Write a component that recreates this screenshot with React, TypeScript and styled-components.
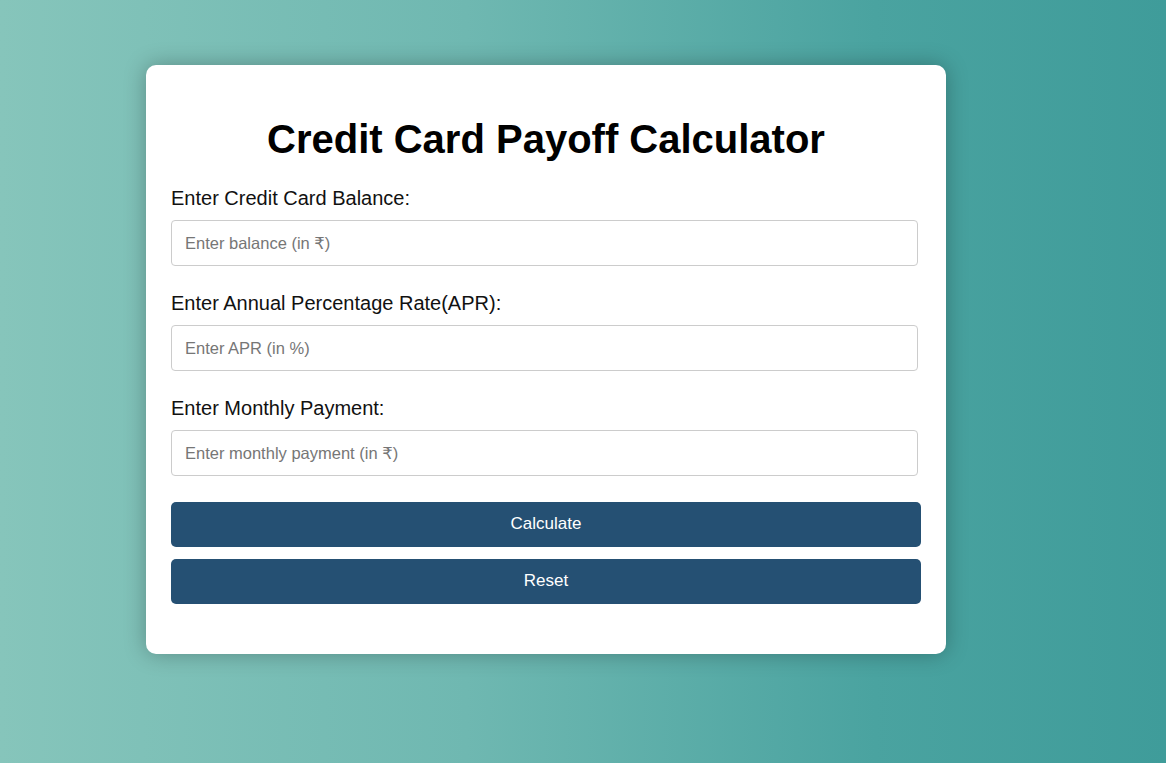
import React from "react";
import styled, { createGlobalStyle } from "styled-components";

const GlobalStyle = createGlobalStyle`
  html, body {
    margin: 0;
    padding: 0;
  }
  body {
    font-family: "Liberation Sans", Arial, sans-serif;
    background: linear-gradient(to right, #86c5bb 0%, #6fb8b1 40%, #4aa3a0 75%, #3f9c9a 100%);
    min-height: 100vh;
  }
`;

const Page = styled.div`
  min-height: 100vh;
  box-sizing: border-box;
  padding: 65px 0 0 146px;
`;

const Card = styled.div`
  width: 800px;
  box-sizing: border-box;
  background: #ffffff;
  border-radius: 10px;
  box-shadow: 0 0 22px rgba(0, 0, 0, 0.28);
  padding: 51px 25px 50px 25px;
  display: flex;
  flex-direction: column;
`;

const Title = styled.h1`
  margin: 0 0 25px 0;
  font-size: 40px;
  line-height: 46px;
  font-weight: 700;
  text-align: center;
  color: #000;
`;

const Field = styled.div`
  display: flex;
  flex-direction: column;
  margin-bottom: 26px;
`;

const Label = styled.label`
  font-size: 20px;
  line-height: 23px;
  color: #111;
  margin-bottom: 10px;
`;

const Input = styled.input`
  width: 747px;
  height: 46px;
  box-sizing: border-box;
  border: 1px solid #cccccc;
  border-radius: 4px;
  padding: 0 13px;
  font-family: "Liberation Sans", "DejaVu Sans", Arial, sans-serif;
  font-size: 16.5px;
  color: #222;
  outline: none;
  &::placeholder {
    color: #767676;
  }
`;

const Buttons = styled.div`
  display: flex;
  flex-direction: column;
  gap: 12px;
`;

const Button = styled.button`
  width: 750px;
  height: 45px;
  padding: 0 0 1px 0;
  border: none;
  border-radius: 5px;
  background: #255073;
  color: #ffffff;
  font-family: "Liberation Sans", Arial, sans-serif;
  font-size: 17px;
  cursor: pointer;
`;

export default function App() {
  return (
    <>
      <GlobalStyle />
      <Page>
        <Card>
          <Title>Credit Card Payoff Calculator</Title>
          <Field>
            <Label>Enter Credit Card Balance:</Label>
            <Input type="number" placeholder="Enter balance (in ₹)" />
          </Field>
          <Field>
            <Label>Enter Annual Percentage Rate(APR):</Label>
            <Input type="number" placeholder="Enter APR (in %)" />
          </Field>
          <Field>
            <Label>Enter Monthly Payment:</Label>
            <Input type="number" placeholder="Enter monthly payment (in ₹)" />
          </Field>
          <Buttons>
            <Button>Calculate</Button>
            <Button>Reset</Button>
          </Buttons>
        </Card>
      </Page>
    </>
  );
}
